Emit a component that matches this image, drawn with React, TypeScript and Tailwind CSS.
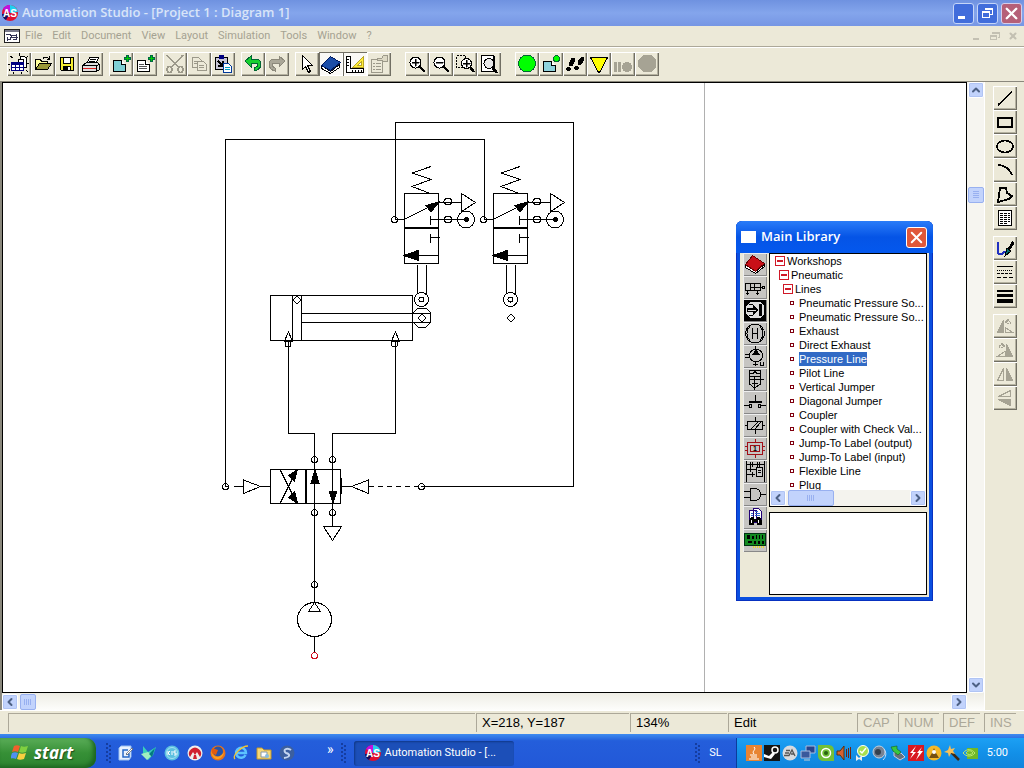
import type { ReactNode } from "react";
import { ChevronDown, ChevronLeft, ChevronRight, ChevronUp, X } from "lucide-react";

const TITLE_FONT = "font-['Open_Sans','Noto_Sans',sans-serif]";
const UI_FONT = "font-['Roboto','Noto_Sans',sans-serif]";
const ARIAL = "font-['Liberation_Sans',Arial,sans-serif]";

interface Tool {
  label: string;
  icon: ReactNode;
  pressed?: boolean;
}

/* ---------- Toolbar icons (24 x 24 grid) ---------- */

const lens = (
  <>
    <circle cx="10.500" cy="10.500" r="5.500" fill="#fff" stroke="#000" />
    <path d="M14.500 14.500l5.500 5.500" stroke="#000" strokeWidth="2.500" />
  </>
);

const sheetPlus = (fill: string, lines: boolean) => (
  <>
    <path d="M4.500 8.500h8l4 4v7h-12z" fill={fill} stroke="#000" />
    <path d="M12.500 8.500v4h4" fill="#fff" stroke="#000" />
    {lines && <path d="M6 12.500h5M6 14.500h8M6 16.500h8" stroke="#555" />}
    <path d="M17.500 3.500h2v2h2v2h-2v2h-2v-2h-2v-2h2z" fill="#0c0" stroke="#064" />
  </>
);

const fileTools: Tool[] = [
  {
    label: "New project",
    icon: (
      <>
        <path d="M3 4l3 2M3 17l-1 2M12 1v3M21 4l-2 2M1 12h2M22 11h-2M6 22l1-2M14 22v-2M21 20l-2-2" stroke="#000" />
        <path d="M13.500 4.500h4l2 2v9h-3v-8h-3z" fill="#fff" stroke="#000" />
        <path d="M11.500 7.500h5v10h-5z" fill="#fff" stroke="#000" />
        <path d="M4.500 10.500h12v8h-12z" fill="#fff" stroke="#000080" />
        <path d="M4 10h13v3H4z" fill="#000080" />
        <path d="M8.500 12v7M12.500 12v7M4 15.500h13" stroke="#000080" />
      </>
    ),
  },
  {
    label: "Open",
    icon: (
      <>
        <path d="M4.500 17.500v-10h5l1 2h6v3" fill="#ff9" stroke="#000" />
        <path d="M4.500 17.500l4-6h12l-4 6z" fill="#9a9838" stroke="#000" />
        <path d="M12 6.500c2-2 4-2 6 0M18.500 3.500v3.500h-3" fill="none" stroke="#000" />
      </>
    ),
  },
  {
    label: "Save",
    icon: (
      <>
        <path d="M5.500 5.500h13v13h-12l-1-1z" fill="#f5ed32" stroke="#000" />
        <path d="M8.500 5.500h7v6h-7z" fill="#fff" stroke="#000" />
        <path d="M8 14h8v5H8z" fill="#000" />
        <path d="M13 15h2v3h-2z" fill="#fff" />
      </>
    ),
  },
  {
    label: "Print",
    icon: (
      <>
        <path d="M8 11l3-6h9l-3 6z" fill="#fff" stroke="#000" />
        <path d="M11 7.500h6M10 9.500h6" stroke="#000" />
        <path d="M3.500 13.500l4-3h11l2 2v5l-3 2h-14z" fill="#ddd" stroke="#000" />
        <path d="M4 13.500h14l2-1M17.500 13v6" fill="none" stroke="#000" />
        <path d="M4 16.500h13" stroke="#d22" />
      </>
    ),
  },
];

const addTools: Tool[] = [
  { label: "New diagram", icon: sheetPlus("#7fd0d4", false) },
  { label: "New report", icon: sheetPlus("#fff", true) },
];

const editTools: Tool[] = [
  {
    label: "Cut",
    icon: (
      <g fill="none" stroke="#9c998a" strokeWidth="1.500">
        <path d="M4 3l12 13M20 3L8 16" />
        <ellipse cx="6.500" cy="17.500" rx="2.500" ry="3" />
        <ellipse cx="17.500" cy="17.500" rx="2.500" ry="3" />
      </g>
    ),
  },
  {
    label: "Copy",
    icon: (
      <g fill="#ece9d8" stroke="#9c998a">
        <path d="M5.500 5.500h6l3 3v7h-9zM7 9.500h5M7 11.500h5" />
        <path d="M10.500 9.500h6l3 3v6h-9zM12 13.500h5M12 15.500h5" />
      </g>
    ),
  },
  {
    label: "Paste",
    icon: (
      <>
        <path d="M4.500 5.500h12v12h-12z" fill="#c7c5d6" stroke="#000" />
        <path d="M8 3h5v4H8z" fill="#000080" />
        <path d="M7 9l4 4M12 9v5H7" fill="none" stroke="#000" strokeWidth="1.500" />
        <path d="M12.500 11.500h5l3 3v6h-8z" fill="#fff" stroke="#00389a" />
        <path d="M14 15.500h5M14 17.500h5" stroke="#00a0c8" />
      </>
    ),
  },
];

const undoTools: Tool[] = [
  {
    label: "Undo",
    icon: <path d="M4 9l6-5v3h4c4 0 6 2 6 5s-2 6-7 7v-3c3-1 4-2 4-3s-1-2-3-2h-4v4z" fill="#17d030" stroke="#063" />,
  },
  {
    label: "Redo",
    icon: <path d="M20 9l-6-5v3h-4c-4 0-6 2-6 5s2 6 6 7v-3c-2-1-3-2-3-3s1-2 3-2h4v4z" fill="#aaa798" stroke="#8c897b" />,
  },
];

const pointerTools: Tool[] = [
  {
    label: "Select",
    icon: <path d="M7.500 3.500v14l3-3 3 6 2-1-3-6h5z" fill="#fff" stroke="#000" />,
  },
  {
    label: "Library",
    pressed: true,
    icon: (
      <>
        <path d="M2.500 13.500l9 6 9-7v3l-9 6-9-5z" fill="#fff" stroke="#000" />
        <path d="M2.500 13.500l9-9 10 6-10 8z" fill="#1c4ea8" stroke="#001a60" />
      </>
    ),
  },
  {
    label: "Rulers",
    pressed: true,
    icon: (
      <>
        <path d="M3.500 4.500h4v12h13v4h-17z" fill="#fff" stroke="#000" />
        <path d="M4 7.500h2M4 10.500h2M4 13.500h2M9.500 20v-2M12.500 20v-2M15.500 20v-2M18.500 20v-2" stroke="#000" />
        <path d="M10 15L20 5v10zM15 13h3v-3z" fill="#ffed38" stroke="#b7a428" fillRule="evenodd" />
      </>
    ),
  },
  {
    label: "Properties",
    icon: (
      <g fill="none" stroke="#9c998a">
        <path d="M4.500 7.500h11v13h-11zM6 11.500h2M9 11.500h5M6 14.500h2M9 14.500h5M6 17.500h2M9 17.500h5" />
        <path d="M10.500 6.500h4l2-3h4v6h-4l-2-1h-4z" fill="#ddd9c5" />
      </g>
    ),
  },
];

const zoomTools: Tool[] = [
  { label: "Zoom in", icon: <>{lens}<path d="M7 10h7v1H7zM10 7h1v7h-1z" stroke="#000" strokeWidth=".5" /></> },
  { label: "Zoom out", icon: <>{lens}<path d="M7 10h7v1H7z" stroke="#000" strokeWidth=".5" /></> },
  {
    label: "Zoom window",
    icon: (
      <>
        <path d="M3.500 3.500h9v12h-9z" fill="none" stroke="#000" strokeDasharray="2 1" />
        <circle cx="13.500" cy="11.500" r="5" fill="#fff" stroke="#000" />
        <path d="M10 11h7v1h-7zM13 8h1v7h-1z" stroke="#000" strokeWidth=".5" />
        <path d="M17 15l4 5" stroke="#000" strokeWidth="2.500" />
      </>
    ),
  },
  {
    label: "Zoom page",
    icon: (
      <>
        <path d="M4.500 3.500h12v16h-12z" fill="#fff" stroke="#000" />
        <path d="M17 4v15" stroke="#000" strokeWidth="2" />
        <circle cx="12" cy="11.500" r="5" fill="#e8e8e8" stroke="#000" />
        <path d="M15 15l5 6" stroke="#000" strokeWidth="2.500" />
      </>
    ),
  },
];

const simTools: Tool[] = [
  { label: "Run simulation", icon: <circle cx="12" cy="11.500" r="8.500" fill="#0f0" stroke="#063" /> },
  {
    label: "Simulate diagram",
    icon: (
      <>
        <path d="M4.500 9.500h8l4 4v6h-12z" fill="#8fd2dc" stroke="#000" />
        <path d="M12.500 9.500v4h4" fill="#fff" stroke="#000" />
        <circle cx="17.500" cy="6.500" r="3" fill="#0f0" stroke="#063" />
      </>
    ),
  },
  {
    label: "Step by step",
    icon: (
      <g>
        <ellipse cx="9" cy="10" rx="2.500" ry="4.500" transform="rotate(25 9 10)" />
        <circle cx="5.500" cy="17" r="2.200" />
        <ellipse cx="18" cy="9" rx="2.500" ry="4.500" transform="rotate(30 18 9)" />
        <circle cx="13.500" cy="16" r="2.200" />
      </g>
    ),
  },
  { label: "Slow motion", icon: <path d="M3.500 5.500h17L12.500 20.500h-1z" fill="#ff0" stroke="#000" /> },
  {
    label: "Pause",
    icon: (
      <g fill="#a6a394">
        <path d="M3 10h3v10H3zM7 10h3v10H7z" />
        <circle cx="16" cy="15" r="5" />
      </g>
    ),
  },
  { label: "Stop", icon: <path d="M8 3h8l5 5v7l-5 5H8l-5-5V8z" fill="#a6a394" /> },
];

const drawTools: Tool[] = [
  { label: "Line", icon: <path d="M5 19L19 6" stroke="#000" strokeWidth="1.500" /> },
  { label: "Rectangle", icon: <path d="M5 8h14v9H5z" fill="none" stroke="#000" strokeWidth="2" /> },
  { label: "Ellipse", icon: <ellipse cx="12" cy="12.500" rx="8" ry="6" fill="none" stroke="#000" strokeWidth="1.800" /> },
  { label: "Arc", icon: <path d="M5 7c6 0 11 3 14 10" fill="none" stroke="#000" strokeWidth="1.800" /> },
  { label: "Polygon", icon: <path d="M7 6h6l1 5 5 3-3 3-11 3z" fill="none" stroke="#000" strokeWidth="1.800" /> },
  {
    label: "Text",
    icon: (
      <>
        <path d="M5.500 4.500h13v15h-13z" fill="#fff" stroke="#000" />
        <path d="M7 7.500h10M7 9.500h10M7 11.500h10M7 13.500h10M7 15.500h10M7 17.500h7" stroke="#000" strokeDasharray="3 1" />
      </>
    ),
  },
];

const styleTools: Tool[] = [
  {
    label: "Colour",
    icon: (
      <>
        <path d="M5 6v10c0 3 5 3 7-1" fill="none" stroke="#2030c0" strokeWidth="2" />
        <path d="M20 4l-5 8 2 2 4-6z" />
        <path d="M14 12l4 3-6 5z" fill="#067070" stroke="#000" />
      </>
    ),
  },
  {
    label: "Line style",
    icon: (
      <g stroke="#000">
        <path d="M4 6.500h16" />
        <path d="M4 10.500h16" strokeDasharray="1 1" />
        <path d="M4 13.500h16" strokeDasharray="3 1" />
        <path d="M4 17.500h16" strokeDasharray="4 2" />
      </g>
    ),
  },
  { label: "Line width", icon: <path d="M4 6h16v2H4zM4 10h16v3H4zM4 15h16v4H4z" /> },
];

const turnTools: Tool[] = [
  {
    label: "Rotate left",
    icon: (
      <g fill="none" stroke="#a6a394">
        <path d="M4.500 18.500l6-12v12z" fill="#a6a394" />
        <path d="M12 18.500h8l-8-5zM13 8c2-2 5-1 5 2M15.500 5l-3 3 3 2" />
      </g>
    ),
  },
  {
    label: "Rotate right",
    icon: (
      <g fill="none" stroke="#a6a394">
        <path d="M19.500 18.500l-6-12v12z" fill="#a6a394" />
        <path d="M12 18.500H4l8-5zM11 8C9 6 6 7 6 10M8.500 5l3 3-3 2" />
      </g>
    ),
  },
  {
    label: "Flip horizontal",
    icon: (
      <g fill="none" stroke="#a6a394">
        <path d="M4.500 18.500l6-12v12z" />
        <path d="M19.500 18.500l-6-12v12z" fill="#a6a394" />
      </g>
    ),
  },
  {
    label: "Flip vertical",
    icon: (
      <g fill="none" stroke="#a6a394">
        <path d="M17.500 4.500l-12 6h12z" />
        <path d="M17.500 19.500l-12-6h12z" fill="#a6a394" />
      </g>
    ),
  },
];

function ToolButton({ tool }: { tool: Tool }) {
  const look = tool.pressed
    ? "bg-[#faf9f5] shadow-[inset_1px_1px_0_#716f64,inset_-1px_-1px_0_#fff]"
    : "bg-[#ece9d8] shadow-[inset_1px_1px_0_#fff,inset_-1px_-1px_0_#716f64,inset_-2px_-2px_0_#b5b2a0]";
  return (
    <button type="button" aria-label={tool.label} className={`block size-6 shrink-0 ${look}`}>
      <svg viewBox="0 0 24 24" shapeRendering="crispEdges" className="size-6">{tool.icon}</svg>
    </button>
  );
}

function ToolGroup({ tools, vertical }: { tools: Tool[]; vertical?: boolean }) {
  return (
    <div className={vertical ? "flex flex-col" : "flex"}>
      {tools.map((t) => <ToolButton key={t.label} tool={t} />)}
    </div>
  );
}

/* ---------- Application chrome ---------- */

function AppLogo() {
  return (
    <svg viewBox="0 0 16 16" className="size-4 shrink-0">
      <circle cx="8" cy="8" r="8" fill="#e01030" />
      <path d="M8 8L1 4a8 8 0 0 1 8-4z" fill="#c010e0" />
      <path d="M8 8V0a8 8 0 0 1 8 7z" fill="#20d0f0" />
      <path d="M8 8L0 9a8 8 0 0 0 4 6z" fill="#101060" />
      <text x="8" y="12" textAnchor="middle" fontSize="10" fontWeight="bold" fontFamily="Liberation Sans" fill="#fff">AS</text>
    </svg>
  );
}

function TitleBar() {
  return (
    <header className="flex h-[26px] shrink-0 items-center gap-1 bg-linear-to-b from-[#6f92e0] via-[#84a5ec] to-[#7696e4] px-[2px]">
      <AppLogo />
      <h1 className={`flex-1 truncate text-[13px] font-semibold text-[#d8e4f8] ${TITLE_FONT}`}>Automation Studio - [Project 1 : Diagram 1]</h1>
      <div className="flex gap-[3px]">
        <button type="button" aria-label="Minimize" className="size-[21px] rounded-[3px] border border-[#c5d5f8] bg-[#416ddb]">
          <svg viewBox="0 0 19 19"><path d="M4 12h7v3H4z" fill="#fff" /></svg>
        </button>
        <button type="button" aria-label="Restore" className="size-[21px] rounded-[3px] border border-[#c5d5f8] bg-[#416ddb]">
          <svg viewBox="0 0 19 19" shapeRendering="crispEdges"><path d="M7.500 6V4.500h7v6H12M4.500 7.500h7v6h-7zM4 8.500h8M7 5.500h8" fill="none" stroke="#fff" /></svg>
        </button>
        <button type="button" aria-label="Close" className="size-[21px] rounded-[3px] border border-[#d5cdea] bg-[#b56078]">
          <X className="size-[19px] text-white" strokeWidth={3} />
        </button>
      </div>
    </header>
  );
}

const menus = ["File", "Edit", "Document", "View", "Layout", "Simulation", "Tools", "Window", "?"];

function MenuBar() {
  return (
    <nav className="flex h-[21px] shrink-0 items-center border-b border-[#aca899] bg-[#ece9d8] px-1">
      <svg viewBox="0 0 16 14" shapeRendering="crispEdges" className="h-[14px] w-4">
        <path d="M.5.5h15v13H.5z" fill="#fff" stroke="#222" />
        <path d="M1 1h14v2H1z" fill="#778" />
        <path d="M2 5.500h4l2 3h6M3 10.500h3l2-4h5M3.500 8v4M12.500 5v6M9 10.500h4" fill="none" stroke="#335" />
      </svg>
      <div className={`ml-[5px] flex flex-1 gap-[10px] text-[11px] leading-4 text-[#a5a292] ${UI_FONT}`}>
        {menus.map((m) => <button type="button" key={m}>{m}</button>)}
      </div>
      <div className="flex gap-2 pr-[2px] text-[#c3c0b2]">
        <button type="button" aria-label="Minimize document"><svg viewBox="0 0 10 10" className="size-[10px]"><path d="M1 7h6v2H1z" fill="currentColor" /></svg></button>
        <button type="button" aria-label="Restore document"><svg viewBox="0 0 10 10" shapeRendering="crispEdges" className="size-[10px]"><path d="M2.500 3V1.500h7v5H8M2 2.500h8M.500 4.500h6v4h-6zM0 5.500h7" fill="none" stroke="currentColor" /></svg></button>
        <button type="button" aria-label="Close document"><X className="size-[10px]" strokeWidth={5} /></button>
      </div>
    </nav>
  );
}

function MainToolbar() {
  return (
    <div className="flex h-[35px] shrink-0 items-start border-t border-b border-t-white border-b-[#8a887c] bg-[#ece9d8] pt-1 pl-[7px]">
      <div className="flex gap-[14px]">
        <div className="flex gap-[6px]">
          <ToolGroup tools={fileTools} />
          <ToolGroup tools={addTools} />
          <ToolGroup tools={editTools} />
          <ToolGroup tools={undoTools} />
          <ToolGroup tools={pointerTools} />
        </div>
        <ToolGroup tools={zoomTools} />
        <ToolGroup tools={simTools} />
      </div>
    </div>
  );
}

/* ---------- Pneumatic diagram ---------- */

function LimitValve({ dx }: { dx: number }) {
  return (
    <g transform={`translate(${dx} 0)`}>
      <path d="M431 166.500L412 173L431 179.500L412 186.500L429 193" />
      <path d="M404.500 193.500h34v70h-34z" />
      <path d="M404 228h35" strokeWidth="2" />
      <circle cx="394.500" cy="219.500" r="3" />
      <path d="M395 219.500h9L438 202.500H461M430.500 216v9M430 219.500h36M430.500 234v9M430 237.500h10M404 255.500h34" />
      <path d="M439 202l-13 3.500 5 6.500zM404 255.500l14-5v10z" fill="#000" />
      <path d="M461.500 193.500l14 9-14 9z" />
      <ellipse cx="448" cy="201.500" rx="4" ry="3" />
      <ellipse cx="448" cy="219.500" rx="4" ry="3" />
      <circle cx="466" cy="219.500" r="8.500" />
      <path d="M465 217h2l2 2v1l-2 2h-2l-2-2v-1z" fill="#000" stroke="none" />
      <path d="M417.500 265v29M426.500 265v29" />
      <circle cx="421.500" cy="299.500" r="7" />
      <circle cx="421.500" cy="299.500" r="2.500" />
      <path d="M422 314l4 4-4 4-4-4z" />
    </g>
  );
}

function Diagram() {
  return (
    <svg viewBox="3 83 701 609" width="701" height="609" className="block shrink-0" fill="none" stroke="#000" shapeRendering="crispEdges">
      {/* pilot lines */}
      <path d="M395.500 219V122.500H573.500V486.500H421M225.500 487V139.500H484.500V219" />
      <LimitValve dx={0} />
      <LimitValve dx={89} />

      {/* cylinder */}
      <path d="M270.500 295.500h142v45h-142zM292.500 295v45M301.500 295v45M301 313.500h129.500v9H301" />
      <path d="M413 313l5-5h8l5 5M413 322l5 5h8l5-5M297 296l4 4-4 4-4-4z" />
      <path d="M288.500 332l-4 9h8zM395.500 332l-4 9h8z" />
      <circle cx="288" cy="344" r="3" />
      <circle cx="394.500" cy="344" r="3" />
      <path d="M288.500 340V433.500H314.500V602M395.500 340V433.500H332.500V526" />

      {/* 4/2 directional valve */}
      <path d="M270.500 469.500h70v34h-70zM280 469.500l17 34M280 503.500l17-34" />
      <path d="M306 469v35M341 478v16" strokeWidth="2" />
      <path d="M297.500 469.500l-9 6 6 6zM297.500 503.500l-9-6 6-6zM315 470l-4 13h8zM333 503l-4-12h8z" fill="#000" />
      <path d="M225 486.500h4M234 486.500h9M260 486.500h10M342 486.500h9M243.500 480l17 6.500-17 7zM368.500 480l-17 6.500 17 7z" />
      <path d="M369 486.500h50" strokeDasharray="5 4" />
      <circle cx="225.500" cy="486.500" r="3" />
      <circle cx="421.500" cy="486.500" r="3" />
      <circle cx="314.500" cy="459.500" r="3" />
      <circle cx="332.500" cy="459.500" r="3" />
      <circle cx="314.500" cy="512.500" r="3" />
      <circle cx="332.500" cy="512.500" r="3" />
      <path d="M323.500 526.500h18l-9 14z" />

      {/* compressor */}
      <circle cx="314.500" cy="584.500" r="3" />
      <circle cx="314.500" cy="619.500" r="17" />
      <path d="M314.500 602.500l-6 9h12zM314.500 637v16" />
      <circle cx="314.500" cy="655.500" r="3" stroke="#d01020" />
    </svg>
  );
}

/* ---------- Library window (24 x 23 icon grid) ---------- */

const workshopIcons: Tool[] = [
  {
    label: "Main library",
    icon: (
      <>
        <path d="M2.500 11.500l10 7 9-7v2l-9 7-10-6z" fill="#fff" stroke="#000" />
        <path d="M2.500 11.500l7-9 12 8-9 8z" fill="#c81018" stroke="#600" />
      </>
    ),
  },
  {
    label: "Hydraulic",
    icon: (
      <g fill="none" stroke="#000">
        <path d="M2.500 7.500h15v7h-15zM7.500 7v8M11.500 7v8M8 11.500h11M4.500 15v4M14.500 15v4M3 17.500h3M13 17.500h3" />
        <circle cx="20.500" cy="11.500" r="1.500" />
      </g>
    ),
  },
  {
    label: "Pneumatic",
    icon: (
      <>
        <path d="M1 1h22v21H1z" />
        <path d="M7 3h10l4 4v8l-4 4H7l-4-4V7z" fill="#ddd" />
        <path d="M4 9h6V6l5 5-5 5v-3H4zM16 5h3v12h-3zM6 5h4v1H6zM6 16h4v1H6z" />
        <path d="M5 11h8v1H5z" fill="#ddd" />
      </>
    ),
  },
  { label: "Hydraulic motors", icon: <g fill="none" stroke="#000"><circle cx="12" cy="11.500" r="9.500" /><path d="M9.500 6v11M14.500 6v11M9 11.500h6M7 5c-4 3-4 10 0 13M17 5c4 3 4 10 0 13" /></g> },
  {
    label: "Pumps",
    icon: (
      <>
        <circle cx="13" cy="10.500" r="6.500" fill="none" stroke="#000" />
        <path d="M13 4l4 6H9z" />
        <path d="M12.500 1v4M12.500 17v4M10 19.500h5M2 9.500h4M2 12.500h4M17.500 17v3h3v-3" fill="none" stroke="#000" />
      </>
    ),
  },
  { label: "Actuators", icon: <path d="M6.500 2.500h11v6h-11zM6 5.500h4l2-2 2 2h3M6.500 11.500h11v-3M6.500 8v8l5 4 6-4v-5M11.500 9v13M18 11.500h3M9 15.500h6" fill="none" stroke="#000" /> },
  {
    label: "Electrical",
    icon: (
      <>
        <path d="M1 14h5v1H1zM18 14h5v1h-5zM6 10h13v2H6zM12 4h1v6h-1z" />
        <path d="M6.500 13.500h2v3h-2zM15.500 13.500h2v3h-2z" fill="none" stroke="#000" strokeWidth="1.500" />
      </>
    ),
  },
  { label: "Control", icon: <path d="M4.500 7.500h15v8h-15zM2 11.500h2M20 11.500h2M8 15l7-7M12 15l6-7M12.500 3v5M12.500 15v5" fill="none" stroke="#000" /> },
  {
    label: "PLC",
    icon: (
      <>
        <path d="M4.500 5.500h15v12h-15zM7.500 8.500h9v6h-9zM12.500 2v3M12.500 18v3" fill="none" stroke="#a01018" />
        <path d="M2 9.500h2M2 13.500h2M20 9.500h2M20 13.500h2" stroke="#a01018" />
        <text x="12" y="14" textAnchor="middle" fontSize="7" fontWeight="bold" fontFamily="Liberation Sans">1</text>
      </>
    ),
  },
  {
    label: "Ladder",
    icon: (
      <>
        <path d="M3.500 1v21M21.500 1v21M4 4.500h17M4 9.500h9M4 14.500h8M7.500 2v5M9.500 2v5M14.500 2v5M16.500 2v5M7.500 7v5M9.500 12v5" fill="none" stroke="#000" />
        <path d="M13.500 7.500h6v9h-6zM15 10.500h3M15 12.500h3" fill="#ccc" stroke="#000" />
      </>
    ),
  },
  { label: "Digital", icon: <path d="M7.500 5.500h4c8 0 8 12 0 12h-4zM1 8.500h6M1 14.500h6M18 11.500h5" fill="none" stroke="#000" /> },
  {
    label: "Search",
    icon: (
      <>
        <path d="M6.500 4.500h7v12h-7zM10.500 2.500h5l3 3v9h-8z" fill="#fff" stroke="#207" />
        <path d="M8 7.500h2M8 9.500h2M12 5.500h3M12 7.500h5M12 9.500h5" stroke="#36c" />
        <path d="M8 11h3v8H6v-4zM14 11h3l2 4v4h-5zM11 13h3v3h-3z" />
        <path d="M8 14h1v3H8zM15 14h1v3h-1z" fill="#fff" />
      </>
    ),
  },
  {
    label: "Interface board",
    icon: (
      <>
        <path d="M1.500 4.500h21v12h-21z" fill="#128a20" stroke="#031" />
        <path d="M4 6h3v4H4zM9 7h2v3H9zM13 6h1v4h-1zM16 6h1v4h-1zM19 6h1v4h-1zM5 12h4v2H5zM11 12h2v3h-2zM15 12h2v3h-2zM19 12h2v3h-2z" />
        <path d="M10 17.500h12" stroke="#e8d830" strokeDasharray="1 1" strokeWidth="2" />
      </>
    ),
  },
];

const branches = [
  { name: "Workshops", pad: "pl-[5px]" },
  { name: "Pneumatic", pad: "pl-[9px]" },
  { name: "Lines", pad: "pl-[13px]" },
];

const components = [
  "Pneumatic Pressure So...",
  "Pneumatic Pressure So...",
  "Exhaust",
  "Direct Exhaust",
  "Pressure Line",
  "Pilot Line",
  "Vertical Jumper",
  "Diagonal Jumper",
  "Coupler",
  "Coupler with Check Val...",
  "Jump-To Label (output)",
  "Jump-To Label (input)",
  "Flexible Line",
  "Plug",
];

function ScrollButton({ label, children }: { label: string; children: ReactNode }) {
  return (
    <button type="button" aria-label={label} className="flex size-4 shrink-0 items-center justify-center rounded-[2px] border border-white bg-[#c2d3fc] text-[#4d6185] shadow-[inset_0_0_0_1px_#b0c4f4]">
      {children}
    </button>
  );
}

function Grip({ vertical }: { vertical?: boolean }) {
  return (
    <svg viewBox="0 0 8 8" className={vertical ? "size-2 rotate-90" : "size-2"} stroke="#98b0f0">
      <path d="M.5 1v6M2.500 1v6M4.500 1v6M6.500 1v6" />
    </svg>
  );
}

function LibraryWindow() {
  return (
    <section className="absolute top-[138px] right-[33px] flex h-[380px] w-[197px] flex-col rounded-t-[6px] bg-[#0a4fe0] px-1 pb-1 shadow-[inset_0_0_0_1px_#0831c0]">
      <div className="-mx-1 flex h-8 shrink-0 items-center gap-[5px] rounded-t-[6px] bg-linear-to-b from-[#2a7cf8] via-[#0554e6] to-[#0458ee] pr-[6px] pl-[5px]">
        <span className="h-3 w-[15px] bg-white" />
        <h2 className={`flex-1 text-[13px] font-semibold text-white ${TITLE_FONT}`}>Main Library</h2>
        <button type="button" aria-label="Close library" className="size-[21px] rounded-[3px] border border-white bg-[#e0583a]">
          <X className="size-[19px] text-white" strokeWidth={2.5} />
        </button>
      </div>
      <div className="flex min-h-0 flex-1 bg-[#ece9d8]">
        <div className="flex w-[29px] shrink-0 flex-col pl-[3px]">
          {workshopIcons.map((w) => (
            <button type="button" key={w.label} aria-label={w.label} className="block h-[23px] w-6 shrink-0 bg-[#c6c5c2] shadow-[inset_1px_1px_0_#eee,inset_-1px_-1px_0_#888]">
              <svg viewBox="0 0 24 23" shapeRendering="crispEdges" className="h-[23px] w-6">{w.icon}</svg>
            </button>
          ))}
        </div>
        <div className="flex min-w-0 flex-1 flex-col gap-[5px] pr-[2px] pb-[2px]">
          <div className="flex h-[254px] shrink-0 flex-col border border-black bg-white">
            <ul className={`min-h-0 flex-1 overflow-hidden text-[11px] leading-[14px] text-black ${ARIAL}`}>
              {branches.map((b) => (
                <li key={b.name} className={`flex items-center gap-[2px] ${b.pad}`}>
                  <svg viewBox="0 0 10 10" shapeRendering="crispEdges" className="size-[10px]">
                    <path d="M.5.5h9v9h-9z" fill="none" stroke="#d01828" />
                    <path d="M2 4h6v2H2z" fill="#d01828" />
                  </svg>
                  {b.name}
                </li>
              ))}
              {components.map((c, i) => (
                <li key={i} className="flex items-center gap-[5px] pl-5 whitespace-nowrap">
                  <span className="size-1 border border-[#800010]" />
                  <span className={c === "Pressure Line" ? "bg-[#316ac5] text-white" : ""}>{c}</span>
                </li>
              ))}
            </ul>
            <div className="flex h-4 shrink-0 bg-[#f4f3ee]">
              <ScrollButton label="Scroll left"><ChevronLeft className="size-3" strokeWidth={4} /></ScrollButton>
              <div className="ml-[2px] flex w-[46px] items-center justify-center rounded-[2px] border border-[#98b0f0] bg-[#c2d3fc]"><Grip /></div>
              <div className="flex-1" />
              <ScrollButton label="Scroll right"><ChevronRight className="size-3" strokeWidth={4} /></ScrollButton>
            </div>
          </div>
          <div className="flex-1 border border-black bg-white" />
        </div>
      </div>
    </section>
  );
}

/* ---------- Work area ---------- */

function WorkArea() {
  return (
    <main className="flex min-h-0 flex-1 bg-[#ece9d8]">
      <div className="flex min-w-0 flex-1 flex-col border-l-2 border-[#8a887c]">
        <div className="flex min-h-0 flex-1">
          <div className="relative flex min-w-0 flex-1 overflow-hidden border border-black bg-white">
            <div className="border-r border-[#b0b0b0]">
              <Diagram />
            </div>
            <LibraryWindow />
          </div>
          <div className="flex w-[17px] shrink-0 flex-col items-center bg-[#f6f5f0]">
            <ScrollButton label="Scroll up"><ChevronUp className="size-3" strokeWidth={4} /></ScrollButton>
            <div className="grow-[89]" />
            <div className="flex size-4 items-center justify-center rounded-[2px] border border-[#98b0f0] bg-[#c2d3fc]"><Grip vertical /></div>
            <div className="grow-[473]" />
            <ScrollButton label="Scroll down"><ChevronDown className="size-3" strokeWidth={4} /></ScrollButton>
          </div>
        </div>
        <div className="flex h-[17px] shrink-0 items-center bg-linear-to-b from-[#eeede5] to-[#fdfdfb] pr-[17px]">
          <ScrollButton label="Scroll left"><ChevronLeft className="size-3" strokeWidth={4} /></ScrollButton>
          <div className="ml-[2px] flex size-4 items-center justify-center rounded-[2px] border border-[#98b0f0] bg-[#c2d3fc]"><Grip /></div>
          <div className="flex-1" />
          <ScrollButton label="Scroll right"><ChevronRight className="size-3" strokeWidth={4} /></ScrollButton>
        </div>
      </div>
      <aside className="flex w-10 shrink-0 flex-col gap-[6px] border-l border-white pt-1 pl-2">
        <ToolGroup tools={drawTools} vertical />
        <ToolGroup tools={styleTools} vertical />
        <ToolGroup tools={turnTools} vertical />
      </aside>
    </main>
  );
}

function StatusBar() {
  const cell = "h-[19px] border-t border-l border-[#aca899] pl-[5px]";
  return (
    <footer className={`flex h-6 shrink-0 items-center gap-px border-t border-white bg-[#ece9d8] pr-2 pl-2 text-[13px] leading-[18px] text-black ${ARIAL}`}>
      <div className={`${cell} flex-1`} />
      <div className={`${cell} w-[153px]`}>X=218, Y=187</div>
      <div className={`${cell} w-[97px]`}>134%</div>
      <div className={`${cell} w-[124px]`}>Edit</div>
      <div className="ml-1 flex gap-1 text-[#aca899]">
        <div className={`${cell} w-[37px]`}>CAP</div>
        <div className={`${cell} w-[41px]`}>NUM</div>
        <div className={`${cell} w-[37px]`}>DEF</div>
        <div className={`${cell} w-8`}>INS</div>
      </div>
    </footer>
  );
}

/* ---------- Taskbar ---------- */

const quickLaunch: Tool[] = [
  { label: "Show desktop", icon: <><path d="M1 3l2-2h10v11l-2 3H1z" fill="#e8f2ff" stroke="#9cc0f0" /><path d="M10 5H5v7h6V9H8" fill="none" stroke="#2468c8" strokeWidth="1.500" /><path d="M8 9l6-6 1 1-6 6z" fill="#fff" stroke="#444" strokeWidth=".6" /></> },
  { label: "Messenger", icon: <><path d="M2 1l5 6 8-5-3 8-5 5-5-5z" fill="#38d0b8" /><path d="M0 9l7-2 4 3-5 5z" fill="#a0f0c0" /><path d="M8 9l6-6-3 9z" fill="#047a80" /></> },
  { label: "Browser", icon: <><circle cx="8" cy="8" r="7.500" fill="#5cc0e0" /><circle cx="8" cy="8" r="5.500" fill="none" stroke="#a5e2f2" /><path d="M4 6v4M4 8l2-2M4 8l2 2M8 6v4M12 6h-2v2h2v2h-2" fill="none" stroke="#fff" /></> },
  { label: "Player", icon: <><circle cx="8" cy="8" r="7.500" fill="#eee" /><path d="M3 12a6 6 0 1 1 10 0l-3-5-2 3-2-3z" fill="#d02030" /><path d="M7 10h2l1 4H6z" fill="#d02030" /></> },
  { label: "Firefox", icon: <><circle cx="8" cy="8" r="7.500" fill="#e8721a" /><circle cx="8" cy="6.500" r="5" fill="#2754a8" /><path d="M1 6c2 7 9 8 13 1-1 9-12 10-13-1z" fill="#f8a020" /><path d="M2 3l6 2-2 5-4-2z" fill="#e05c10" /></> },
  { label: "Internet Explorer", icon: <><path d="M12.500 10A5 5 0 1 1 13 8H4" fill="none" stroke="#5cc4ff" strokeWidth="2.500" /><path d="M2 14C-1 11 8 1 15 1" fill="none" stroke="#f4c430" strokeWidth="1.300" /></> },
  { label: "Explorer", icon: <><path d="M1 3h5l2 2h7v9H1z" fill="#f6d878" stroke="#c59828" /><path d="M5 7h6v5H5z" fill="#fff" stroke="#89a" /><circle cx="11" cy="11" r="2" fill="#8bd" /></> },
  { label: "Media", icon: <><circle cx="8" cy="8" r="7.500" fill="#3c5f9f" /><path d="M12 5c-4-3-9 0-5 3 4 1 5 4-2 5" fill="none" stroke="#c4d5f0" strokeWidth="2" /></> },
];

const trayIcons: Tool[] = [
  { label: "Java", icon: <><path d="M0 0h16v16H0z" fill="#e88432" /><path d="M8 2c3 3-3 4 0 7M4 10h7M5 12h6M3 14h10" fill="none" stroke="#fff" /></> },
  { label: "Steam", icon: <><path d="M0 0h16v16H0z" fill="#151515" /><circle cx="11" cy="5" r="3" fill="none" stroke="#fff" strokeWidth="1.500" /><path d="M0 9l5 2 4-4 2 2-4 5-7-2z" fill="#fff" /></> },
  { label: "EA", icon: <><circle cx="8" cy="8" r="7.500" fill="#d8dade" /><path d="M4 5.500h4M3 8h4M2 10.500h5L10 5l3 6M9 9h3" fill="none" stroke="#555" strokeWidth="1.300" /></> },
  { label: "Network", icon: <><path d="M6 1h9v7H6z" fill="#28448c" stroke="#a9bbdd" /><path d="M1 6h9v7H1z" fill="#39589c" stroke="#a9bbdd" /><path d="M4 15h6" stroke="#ccc" /></> },
  { label: "Eye", icon: <><path d="M0 0h10c4 0 6 2 6 6v10H6c-4 0-6-2-6-6z" fill="#72bf38" /><circle cx="8" cy="8" r="4.500" fill="none" stroke="#fff" strokeWidth="1.500" /><circle cx="8" cy="8" r="2" fill="#286410" /></> },
  { label: "Sound", icon: <><path d="M1 6h3l4-5v14l-4-5H1z" fill="#d76030" stroke="#531" /><path d="M10.500 4v8M12.500 3v10M14.500 2v12" stroke="#6e2510" /></> },
  { label: "Messenger status", icon: <><circle cx="9" cy="6" r="5.500" fill="#a8df50" stroke="#fff" /><path d="M6 6l2 2 4-5" fill="none" stroke="#fff" strokeWidth="1.500" /><path d="M2 10l3 3 3-3v6l-3-2-3 2z" fill="#eee" /></> },
  { label: "Volume", icon: <><circle cx="7" cy="7" r="6" fill="#768394" stroke="#c5cfdb" /><circle cx="6" cy="7" r="3" fill="#35404d" /><path d="M12 4c3 4 2 8-1 11" fill="none" stroke="#c5dcf7" /></> },
  { label: "Safely remove", icon: <><path d="M4 7l7 1 4 4-5 3-6-4z" fill="#66717d" stroke="#ccd" /><path d="M1 2l6-1v3l4 3-3 3-5-4z" fill="#38c840" stroke="#155c20" strokeWidth=".6" /></> },
  { label: "Flash", icon: <><path d="M0 0h16v16H0z" fill="#d81820" /><path d="M8 1L2 8h3l-3 6 6-7H5zM14 2l-5 6h2l-3 7 7-9h-3z" fill="#fff" /></> },
  { label: "Norton", icon: <><circle cx="8" cy="8" r="7.500" fill="#f4b828" /><path d="M8 3l2 5 3 5H3l3-5z" fill="#765010" /><circle cx="8" cy="7" r="2" fill="#fff" /></> },
  { label: "Wizard", icon: <><path d="M7 7l8 8" stroke="#402810" strokeWidth="2.500" /><path d="M6 0l1 4 4-1-2 3 2 3-4-1-2 4-1-4-4-1 4-2z" fill="#f8c058" /></> },
  { label: "NVIDIA", icon: <><path d="M5 3h11v11H5z" fill="#70b828" /><path d="M1 8c4-5 9-4 12 0-3 4-9 4-12 0zM4 8c2-3 5-3 7 0-2 2-5 2-7 0z" fill="none" stroke="#bde86f" /></> },
];

function TaskIcon({ tool }: { tool: Tool }) {
  return (
    <button type="button" aria-label={tool.label} className="size-4 shrink-0">
      <svg viewBox="0 0 16 16" className="size-4">{tool.icon}</svg>
    </button>
  );
}

function TaskGrip() {
  return (
    <svg viewBox="0 0 5 20" className="h-5 w-[5px] shrink-0" fill="#153da0">
      {[0, 4, 8, 12, 16].map((y) => <path key={y} d={`M0 ${y}h2v2H0zM3 ${y + 2}h2v2H3z`} />)}
    </svg>
  );
}

function Taskbar() {
  return (
    <div className={`flex h-[34px] shrink-0 items-end bg-linear-to-b from-[#3f8cf0] from-0% via-[#245edb] via-20% to-[#2258d8] text-[11px] text-white ${UI_FONT}`}>
      <button type="button" className="flex h-[30px] w-24 shrink-0 items-center gap-[5px] rounded-r-[10px] bg-linear-to-b from-[#5aad58] via-[#369036] to-[#2d8430] pl-[11px] shadow-[inset_-3px_-2px_4px_#1c6420]">
        <svg viewBox="0 0 18 18" className="size-[18px]">
          <path d="M3 2c2-1 4-1 6 0L7 8C5 7 3 7 1 8z" fill="#f0602c" />
          <path d="M10 2c2 1 4 1 7 0l-2 6c-3 1-5 1-7 0z" fill="#80d040" />
          <path d="M1 9c2-1 4-1 6 0l-2 6c-2-1-4-1-6 0z" fill="#5090f0" />
          <path d="M8 9c2 1 4 1 7 0l-2 6c-3 1-5 1-7 0z" fill="#f8d040" />
        </svg>
        <span className={`text-[17px] leading-5 font-bold italic [text-shadow:1px_1px_1px_#1c4c1c] ${TITLE_FONT}`}>start</span>
      </button>
      <div className="flex h-[30px] min-w-0 flex-1 items-center">
        <div className="ml-[10px] flex items-center gap-[7px]">
          <TaskGrip />
          <div className="flex gap-[7px]">
            {quickLaunch.map((q) => <TaskIcon key={q.label} tool={q} />)}
          </div>
        </div>
        <button type="button" aria-label="More shortcuts" className="ml-8 pb-2 text-[14px] leading-4">»</button>
        <div className="ml-[7px] flex items-center gap-2">
          <TaskGrip />
          <button type="button" className="flex h-[25px] w-40 items-center gap-1 rounded-[3px] bg-[#1c4fb8] pl-[11px] whitespace-nowrap shadow-[inset_1px_1px_2px_#103888]">
            <AppLogo />
            Automation Studio - [...
          </button>
        </div>
        <div className="flex-1" />
        <TaskGrip />
        <span className="pr-[14px] pl-[9px]">SL</span>
      </div>
      <div className="flex h-[30px] shrink-0 items-center gap-[2px] border-l border-[#0c3c9c] bg-linear-to-b from-[#1ca0f4] via-[#1290e8] to-[#1184dc] pr-4 pl-[9px]">
        {trayIcons.map((t) => <TaskIcon key={t.label} tool={t} />)}
        <time className="pl-[7px]">5:00</time>
      </div>
    </div>
  );
}

export default function App() {
  return (
    <div className="flex h-screen min-h-[600px] flex-col overflow-hidden">
      <TitleBar />
      <MenuBar />
      <MainToolbar />
      <WorkArea />
      <StatusBar />
      <Taskbar />
    </div>
  );
}
